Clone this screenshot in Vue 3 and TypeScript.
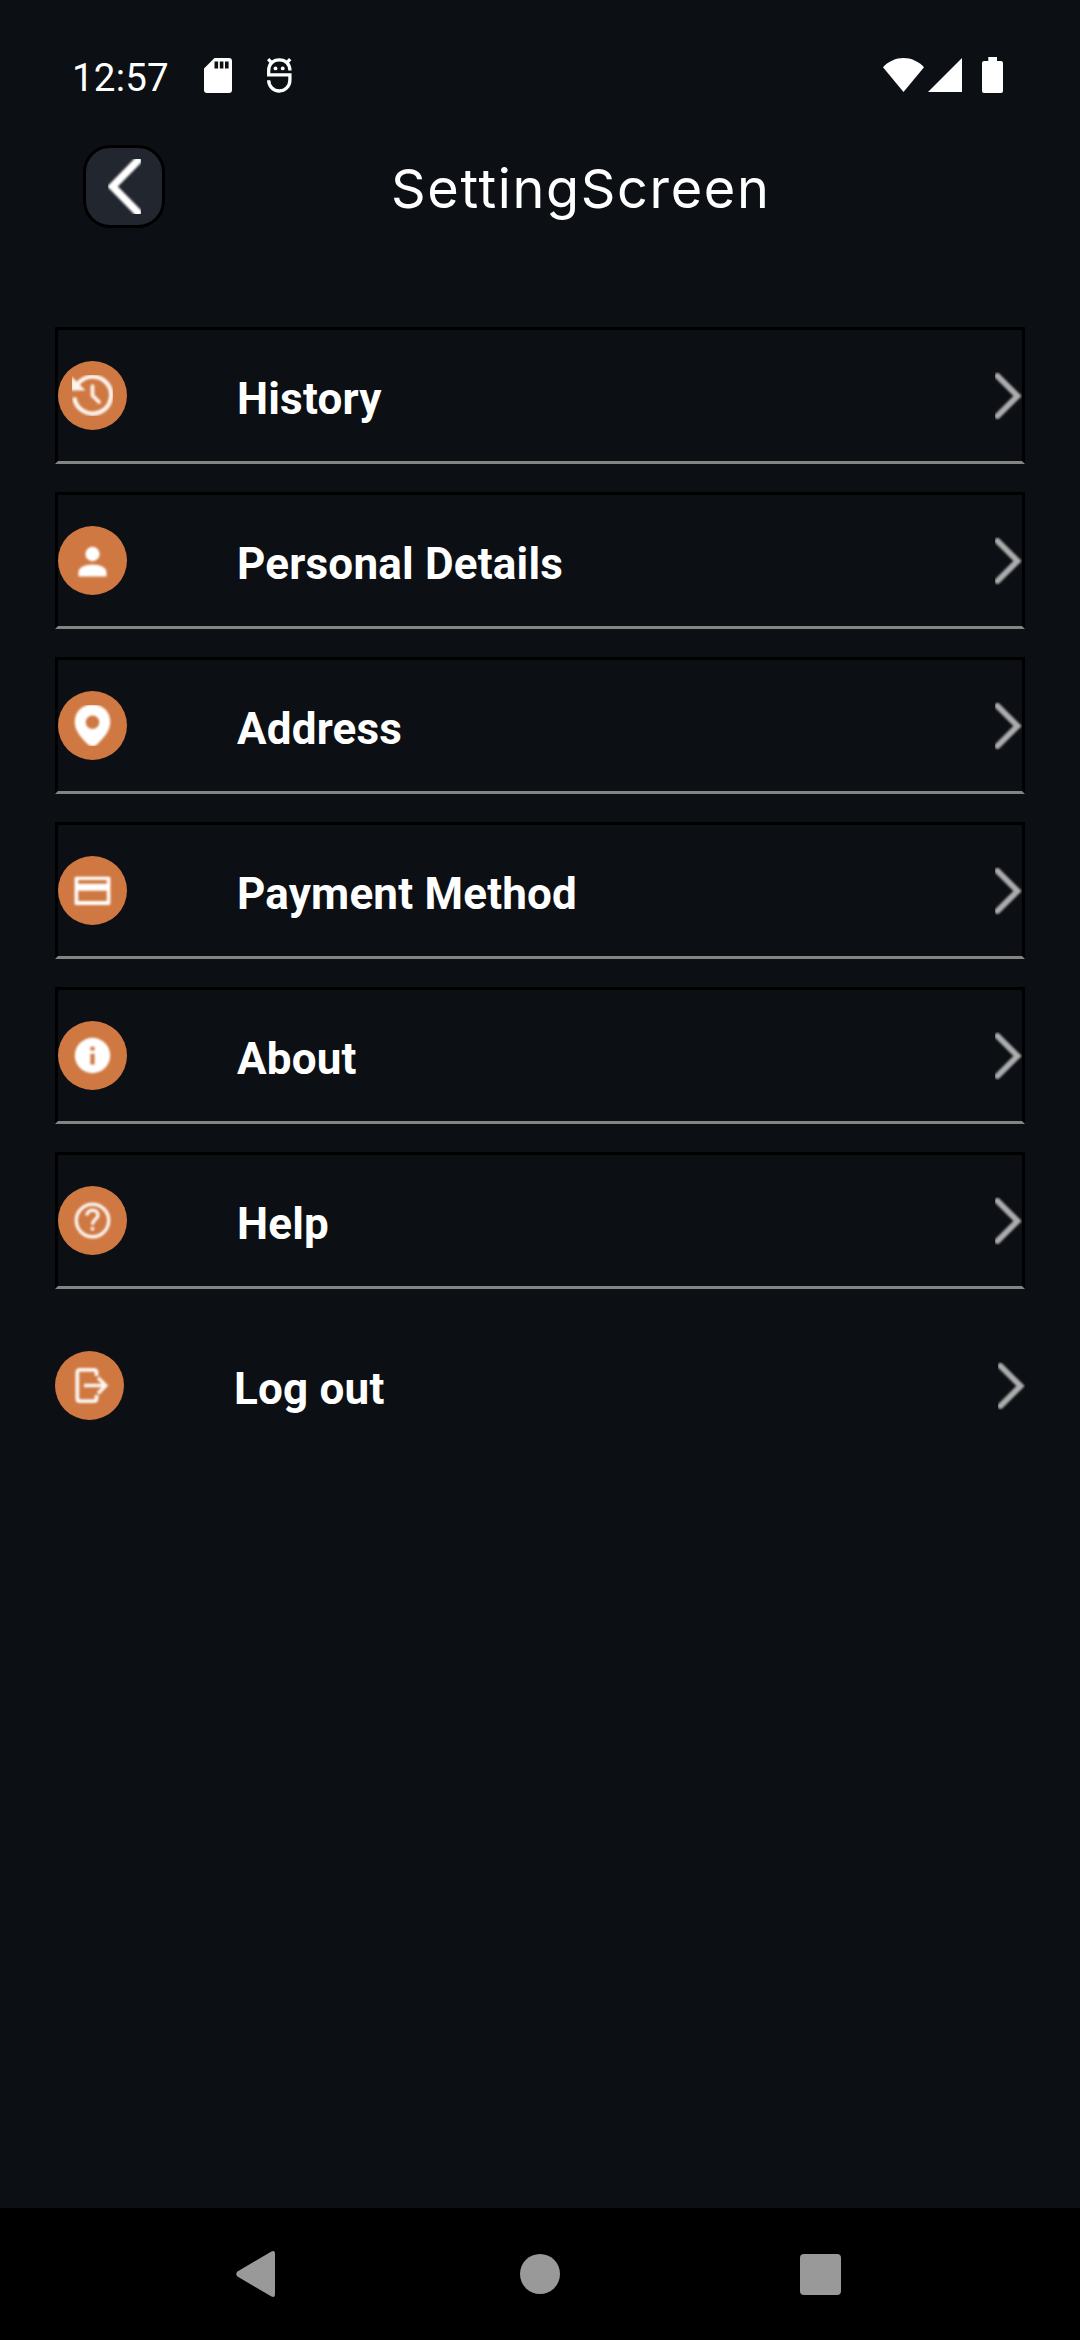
<script setup lang="ts">
type IconName = 'history' | 'person' | 'pin' | 'card' | 'info' | 'help' | 'logout'

interface SettingItem {
  label: string
  icon: IconName
}

const items: SettingItem[] = [
  { label: 'History', icon: 'history' },
  { label: 'Personal Details', icon: 'person' },
  { label: 'Address', icon: 'pin' },
  { label: 'Payment Method', icon: 'card' },
  { label: 'About', icon: 'info' },
  { label: 'Help', icon: 'help' },
  { label: 'Log out', icon: 'logout' },
]
</script>

<template>
  <div class="screen">
    <div class="status">
      <span class="clock">12:57</span>
      <svg class="sd" width="28" height="35" viewBox="0 0 28 35">
        <path fill="#fff" fill-rule="evenodd" d="M10.5 0H25a3 3 0 0 1 3 3v29a3 3 0 0 1-3 3H3a3 3 0 0 1-3-3V10.5zM10.5 3.5v7h3.6v-7zM15.8 3.5v7h3.6v-7zM21 3.5v7h3.6v-7z" />
      </svg>
      <svg class="bug" width="25" height="35" viewBox="0 0 25 35">
        <g fill="none" stroke="#fff" stroke-width="3.3">
          <path d="M1.700 17V12.500C1.700 6 6 1.900 12.300 1.900S22.900 6 22.900 12.500" />
          <path d="M.1 16.800H22.900V22C22.900 28.500 18 33 12.300 33S1.700 28.500 1.700 22.300" />
          <path d="M1.200 1.200 5 5.200M23.200 1.200 19.400 5.200" />
        </g>
        <circle cx="8.500" cy="10.400" r="1.900" fill="#fff" />
        <circle cx="15.700" cy="10.400" r="1.900" fill="#fff" />
      </svg>
      <div class="signals">
        <svg class="wifi" width="41" height="34" viewBox="0 0 41 34">
          <path fill="#fff" d="M0 9.200C5.500 3.300 12.800 0 20.500 0S35.500 3.300 41 9.200L20.500 34z" />
        </svg>
        <svg class="cell" width="34" height="34" viewBox="0 0 34 34"><path fill="#fff" d="M34 0v34H0z" /></svg>
        <svg width="21" height="36" viewBox="0 0 21 36">
          <path fill="#fff" d="M6.300 0h8.700v4H19a2 2 0 0 1 2 2v28a2 2 0 0 1-2 2H2a2 2 0 0 1-2-2V6a2 2 0 0 1 2-2h4.300z" />
        </svg>
      </div>
    </div>

    <header class="header">
      <button class="back" aria-label="Back">
        <svg width="33" height="55" viewBox="0 0 33 55">
          <path class="soft" fill="none" stroke="#fff" stroke-width="7.500" stroke-linecap="round" d="M30 1.500 4.500 27.500 30 53.500" />
        </svg>
      </button>
      <h1 class="title">SettingScreen</h1>
    </header>

    <main class="list">
      <div v-for="item in items" :key="item.label" class="row" :class="{ plain: item.icon === 'logout' }">
        <div class="badge">
          <svg width="41" height="41" viewBox="0 0 41 41">
            <g class="soft" fill="none" stroke="#fff" stroke-linecap="round" stroke-linejoin="round">
              <g v-if="item.icon === 'history'" opacity=".92">
                <path stroke-width="4.400" stroke-linecap="butt" d="M5.500 9.500A18.500 18.500 0 1 1 2.300 22.500" />
                <path fill="#fff" stroke="none" d="M-1 1 13.500 15.500H-1z" />
                <path stroke-width="3.800" d="M20.500 11.200V20.500L27 27" />
              </g>
              <g v-else-if="item.icon === 'person'" fill="#fff" stroke="none">
                <circle cx="20.500" cy="14" r="7.200" />
                <path d="M6.500 36.500V32c0-4.700 6.500-7.600 14-7.600s14 2.900 14 7.600v4.500z" />
              </g>
              <path v-else-if="item.icon === 'pin'" fill="#fff" stroke="none" fill-rule="evenodd" d="M20.500-.5C10.500-.5 2.700 6.500 2.700 17c0 9.500 7.800 17 12.800 22 3 3 7 3 10 0 5-5 12.800-12.500 12.800-22C38.300 6.500 30.500-.5 20.500-.5zM20.500 10.500a6.800 6.800 0 1 1 0 13.600a6.800 6.800 0 1 1 0-13.600z" />
              <path v-else-if="item.icon === 'card'" fill="#fff" stroke="none" fill-rule="evenodd" d="M4 6.700H37a1.400 1.400 0 0 1 1.400 1.400V33.600a1.400 1.400 0 0 1-1.400 1.400H4a1.400 1.400 0 0 1-1.400-1.400V8.100A1.400 1.400 0 0 1 4 6.700zM6.200 10v3.800H34.800V10zM6.200 20.800V31H34.800V20.800z" />
              <path v-else-if="item.icon === 'info'" fill="#fff" stroke="none" fill-rule="evenodd" d="M20.500 2.800a17.700 17.700 0 1 1 0 35.400a17.700 17.700 0 1 1 0-35.400zM18.400 11.800v3.700h4.200v-3.700zM18.400 18.800v10.600h4.200V18.800z" />
              <g v-else-if="item.icon === 'help'" opacity=".92" stroke-width="3.400">
                <circle cx="20.500" cy="20.500" r="16.200" />
                <path stroke-linecap="butt" d="M15 15.500C15 8.500 26 8.500 26 15.200C26 19 20.500 19.200 20.500 24.800" />
                <circle cx="20.500" cy="28.800" r="2" fill="#fff" stroke="none" />
              </g>
              <g v-else opacity=".94" stroke-width="3.800" stroke-linecap="butt">
                <path d="M27.500 11V7.500Q27.500 4.800 24.800 4.800H11Q8.300 4.800 8.300 7.500V33.500Q8.300 36.200 11 36.200H24.800Q27.500 36.200 27.500 33.500V30" />
                <path stroke-width="3.500" stroke-linejoin="miter" d="M15 20.600H36M29 12.700 36.800 20.600 29 28.500" />
              </g>
            </g>
          </svg>
        </div>
        <span class="label">{{ item.label }}</span>
        <svg class="chevron" width="27" height="48" viewBox="0 0 27 48">
          <path class="soft" fill="none" stroke="#adadad" stroke-width="6" stroke-linecap="round" d="M2.500 4 22.500 24 2.500 44" />
        </svg>
      </div>
    </main>

    <nav class="navbar">
      <svg width="40" height="46" viewBox="0 0 40 46">
        <path fill="#999" d="M35 .8Q39-1.500 39 3V43Q39 47.500 35 45.200L1.500 25.500Q-1 23 1.500 20.500z" />
      </svg>
      <span class="home"></span>
      <span class="recent"></span>
    </nav>
  </div>
</template>

<style>
body {
  margin: 0;
  background: #0c0f14;
}
</style>

<style scoped>
.screen {
  display: flex;
  flex-direction: column;
  width: 1080px;
  height: 2340px;
  overflow: hidden;
  background: #0c0f14;
  color: #fff;
  font-family: Roboto, "Liberation Sans", sans-serif;
}
svg {
  display: block;
  flex: none;
}
.soft {
  filter: blur(0.8px);
}
.status {
  display: flex;
  align-items: flex-start;
  box-sizing: border-box;
  height: 145px;
  padding: 57px 77px 0 72px;
}
.clock {
  width: 132px;
  font-size: 38.5px;
  line-height: 42px;
  letter-spacing: 0.2px;
}
.sd {
  margin-top: 1px;
}
.bug {
  margin: 1px 0 0 35px;
}
.signals {
  display: flex;
  margin-left: auto;
}
.wifi {
  margin: 1px 4px 0 0;
}
.cell {
  margin: 1px 20px 0 0;
}
.header {
  display: flex;
  align-items: center;
  height: 83px;
  padding-left: 83px;
}
.back {
  display: flex;
  box-sizing: border-box;
  width: 82px;
  height: 83px;
  padding: 11px 0 0 22px;
  border: 3px solid #000;
  border-radius: 27px;
  background: #22262e;
}
.title {
  margin: 0 0 0 226px;
  padding-top: 4px;
  font-family: Inter, "Open Sans", sans-serif;
  font-size: 54px;
  font-weight: 400;
  line-height: 79px;
  letter-spacing: 1.65px;
  white-space: nowrap;
}
.list {
  display: flex;
  flex: 1;
  flex-direction: column;
  gap: 28px;
  padding: 99px 55px 0;
}
.row {
  display: flex;
  align-items: center;
  box-sizing: border-box;
  height: 137px;
  border: 3px solid #000;
  border-bottom-color: #848484;
}
.plain {
  border-color: transparent;
  border-width: 3px 0;
}
.badge {
  display: flex;
  align-items: center;
  justify-content: center;
  flex: none;
  width: 69px;
  height: 69px;
  border-radius: 50%;
  background: #d07842;
}
.label {
  margin-left: 110px;
  padding-top: 6px;
  font-size: 44px;
  font-weight: 700;
  line-height: 52px;
  letter-spacing: 0.2px;
}
.chevron {
  margin-left: auto;
}
.navbar {
  display: flex;
  align-items: center;
  height: 132px;
  padding-left: 236px;
  background: #000;
}
.home {
  width: 40px;
  height: 40px;
  margin-left: 244px;
  border-radius: 50%;
  background: #999;
}
.recent {
  width: 41px;
  height: 41px;
  margin-left: 240px;
  border-radius: 4px;
  background: #999;
}
</style>
